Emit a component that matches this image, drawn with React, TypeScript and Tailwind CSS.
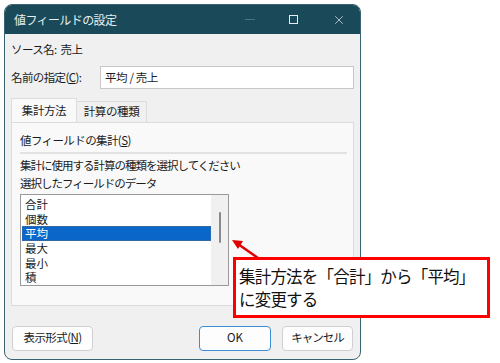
import { X } from 'lucide-react'

const FONT = { fontFamily: '"Noto Sans CJK JP", "Noto Sans", sans-serif' }

const ITEMS = ['合計', '個数', '平均', '最大', '最小', '積']

export default function App() {
  return (
    <div className="relative h-[363px] w-[500px] overflow-hidden bg-white text-[11.5px] text-[#1b1b1b]" style={FONT}>
      <div className="ml-[4px] mt-[4px] flex h-[356px] w-[357px] flex-col overflow-hidden rounded-[8px] border border-[#3a6472] bg-[#f0f0f0]">
        {/* title bar */}
        <div className="flex h-[29px] shrink-0 items-center bg-[#1a4a5a] pl-[9px] text-[12px] text-[#e6eef0]">
          <span className="tracking-[-0.6px]">値フィールドの設定</span>
          <div className="ml-auto flex items-center">
            <span className="mr-[34px] h-px w-[10px] bg-[#4a7482]" />
            <span className="mr-[34px] h-[9px] w-[9px] border border-[#e6eef0]" />
            <X size={14} strokeWidth={1.2} className="mr-[14px] text-[#e6eef0]" />
          </div>
        </div>

        <div className="flex flex-1 flex-col px-[6px]">
          <div className="mt-[6px] flex h-[20px] items-center tracking-[-0.6px]">ソース名:&nbsp; 売上</div>

          <div className="mt-[6px] flex h-[23px] items-center">
            <span className="w-[89px] tracking-[-0.6px]">
              名前の指定(<span className="underline">C</span>):
            </span>
            <div className="flex h-[23px] flex-1 items-center border border-[#c8c8c8] bg-white pl-[4px] tracking-[-0.4px]">
              平均 / 売上
            </div>
          </div>

          {/* tabs */}
          <div className="mt-[10px] flex h-[23px] items-end">
            <div className="flex h-[24px] w-[66px] items-center justify-center border border-b-0 border-[#dcdcdc] bg-[#f9f9f9] tracking-[-0.4px]">
              集計方法
            </div>
            <div className="flex h-[21px] w-[70px] items-center justify-center border border-b-0 border-l-0 border-[#dcdcdc] bg-[#f0f0f0] tracking-[-0.4px]">
              計算の種類
            </div>
          </div>

          <div className="flex h-[184px] flex-col border border-[#dcdcdc] bg-[#f9f9f9] pl-[8px] pr-[6px]">
            <div className="mt-[9px] flex h-[18px] items-center tracking-[-0.6px]">
              値フィールドの集計(<span className="underline">S</span>)
            </div>
            <div className="mt-[2px] h-[2px] bg-[#e2e2e2]" />
            <div className="mt-[3px] flex h-[18px] items-center tracking-[-1px]">集計に使用する計算の種類を選択してください</div>
            <div className="flex h-[18px] items-center tracking-[-1px]">選択したフィールドのデータ</div>

            <div className="mt-px flex h-[92px] w-[209px] border border-[#9a9a9a] bg-white">
              <div className="flex flex-1 flex-col pl-px pt-[2px]">
                {ITEMS.map((it, i) => (
                  <div
                    key={it}
                    className={
                      i === 2
                        ? 'flex h-[14.6px] items-center border border-dotted border-[#3d6fa8] bg-[#0a66c8] pl-[2px] text-[11.5px] leading-[12px] text-white'
                        : 'flex h-[14.6px] items-center pl-[3px] text-[11.5px] leading-[12px]'
                    }
                  >
                    {it}
                  </div>
                ))}
              </div>
              <div className="flex w-[17px] justify-center bg-[#f0f0f0] pt-[17px]">
                <span className="h-[31px] w-[2px] rounded-full bg-[#8a8a8a]" />
              </div>
            </div>
          </div>

          <div className="mt-[19px] flex h-[26px] items-center">
            <div className="ml-px flex h-[25px] w-[81px] items-center justify-center rounded-[4px] border border-[#d0d0d0] bg-[#fdfdfd] tracking-[-0.6px]">
              表示形式(<span className="underline">N</span>)
            </div>
            <div className="ml-auto flex h-[25px] w-[72px] items-center justify-center rounded-[4px] border border-[#3b8ed6] bg-[#fdfdfd]">
              OK
            </div>
            <div className="ml-[11px] mr-[1px] flex h-[25px] w-[71px] items-center justify-center rounded-[4px] border border-[#d0d0d0] bg-[#fdfdfd] tracking-[-1px]">
              キャンセル
            </div>
          </div>
        </div>
      </div>

      {/* callout arrow */}
      <svg className="absolute left-0 top-0" width="500" height="363">
        <line x1="258" y1="258" x2="238" y2="244" stroke="#e00000" strokeWidth="2.5" />
        <polygon points="232,240 243,241 238,249" fill="#e00000" />
      </svg>

      {/* callout box */}
      <div className="absolute left-[233px] top-[257px] flex h-[61px] w-[257px] flex-col justify-center border-[3px] border-[#ff0000] bg-white pl-[3px] text-[16.5px] leading-[23px] tracking-[-0.8px] text-[#111]">
        <div>集計方法を「合計」から「平均」</div>
        <div>に変更する</div>
      </div>
    </div>
  )
}
